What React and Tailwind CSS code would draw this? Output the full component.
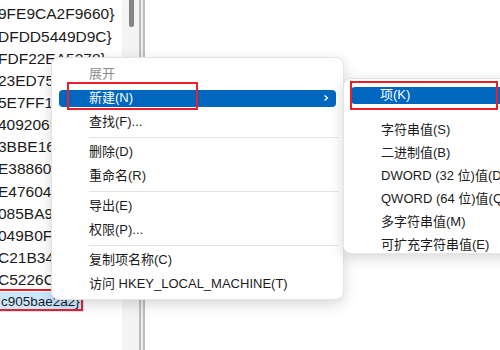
import React from "react";

const font = { fontFamily: '"Liberation Sans", "Noto Sans CJK SC", sans-serif' };

const rows = [
  "9FE9CA2F9660}",
  "DFDD5449D9C}",
  "FDF22EA5278}",
  "23ED75B4C2F}",
  "5E7FF1A62B0}",
  "409206D1E4A}",
  "3BBE16F0A57}",
  "E388606C9D1}",
  "E476045B82F}",
  "085BA9E7C3D}",
  "049B0F85A61}",
  "C21B34F09E2}",
  "C5226C8D4B7}",
];

function Item({ children, muted, active, arrow, indent = "pl-[30px]" }) {
  return (
    <div className="h-6 flex items-center px-[7px]">
      <div
        className={
          "h-[17px] w-full flex items-center rounded-[4px] " +
          indent +
          (active ? " bg-[#0067c0] text-white" : muted ? " text-[#8c8c8c]" : " text-[#1b1b1b]")
        }
      >
        <span className="flex-1 whitespace-nowrap">{children}</span>
        {arrow && (
          <svg width="8" height="8" viewBox="0 0 8 8" className="mr-[6px]">
            <path d="M2.5 1.5 L5.5 4 L2.5 6.5" fill="none" stroke="white" strokeWidth="1.3" />
          </svg>
        )}
      </div>
    </div>
  );
}

function Sep() {
  return (
    <div className="h-[6px] flex items-center pl-[37px] pr-[5px]">
      <div className="h-px w-full bg-[#e3e3e3]" />
    </div>
  );
}

export default function App() {
  return (
    <div className="relative w-[500px] h-[350px] overflow-hidden bg-white text-[13px]" style={font}>
      <div className="flex h-full">
        <div className="w-[122px] overflow-hidden pt-[3px] text-[#1b1b1b]">
          {rows.map((r) => (
            <div key={r} className="h-[22.15px] flex items-center whitespace-nowrap ml-[-2px] text-[15.5px]">
              {r}
            </div>
          ))}
          <div className="h-[22px] flex items-center whitespace-nowrap">
            <span className="bg-[#cce8ff] pl-[1px] pr-[4px] h-[20px] flex items-center text-[13.5px]">c905bae2a2}</span>
          </div>
        </div>
        <div className="w-[17px] bg-[#f3f3f3] flex justify-center pl-[1px]">
          <div className="w-[5px] h-[27px] bg-[#858585] rounded-b-[2px]" />
        </div>
        <div className="w-[6px] flex">
          <div className="w-[2px] bg-[#bdbdbd]" />
          <div className="w-[2px] bg-[#ececec]" />
          <div className="w-[2px] bg-[#bdbdbd]" />
        </div>
        <div className="flex-1 bg-white" />
      </div>

      {/* red box around selected key */}
      <div className="absolute left-[-2px] top-[289px] w-[85px] h-[22px] border-2 border-[#e8202a]" />

      {/* context menu */}
      <div className="absolute left-[51px] top-[57px] w-[293px] rounded-[8px] bg-white border border-[#e4e4e4] shadow-[0_4px_14px_rgba(0,0,0,0.16)] pt-[4px] pb-[3px]">
        <Item muted>展开</Item>
        <Item active arrow>新建(N)</Item>
        <Item>查找(F)...</Item>
        <Sep />
        <Item>删除(D)</Item>
        <Item>重命名(R)</Item>
        <Sep />
        <Item>导出(E)</Item>
        <Item>权限(P)...</Item>
        <Sep />
        <Item>复制项名称(C)</Item>
        <Item>访问 HKEY_LOCAL_MACHINE(T)</Item>
      </div>
      <div className="absolute left-[67px] top-[82px] w-[131px] h-[28px] border-2 border-[#e8202a]" />

      {/* submenu */}
      <div className="absolute left-[343px] top-[78px] w-[190px] h-[176px] rounded-[8px] bg-white border border-[#e4e4e4] shadow-[0_4px_14px_rgba(0,0,0,0.16)] pt-[4px] text-[#1b1b1b]">
        <Item active indent="pl-[29px]">项(K)</Item>
        <div className="h-[11px]" />
        {["字符串值(S)", "二进制值(B)", "DWORD (32 位)值(D)", "QWORD (64 位)值(Q)", "多字符串值(M)", "可扩充字符串值(E)"].map((t) => (
          <div key={t} className="h-[23px] flex items-center pl-[37px] whitespace-nowrap">
            {t}
          </div>
        ))}
      </div>
      <div className="absolute left-[350px] top-[81px] w-[148px] h-[29px] border-2 border-[#e8202a]" />
    </div>
  );
}
